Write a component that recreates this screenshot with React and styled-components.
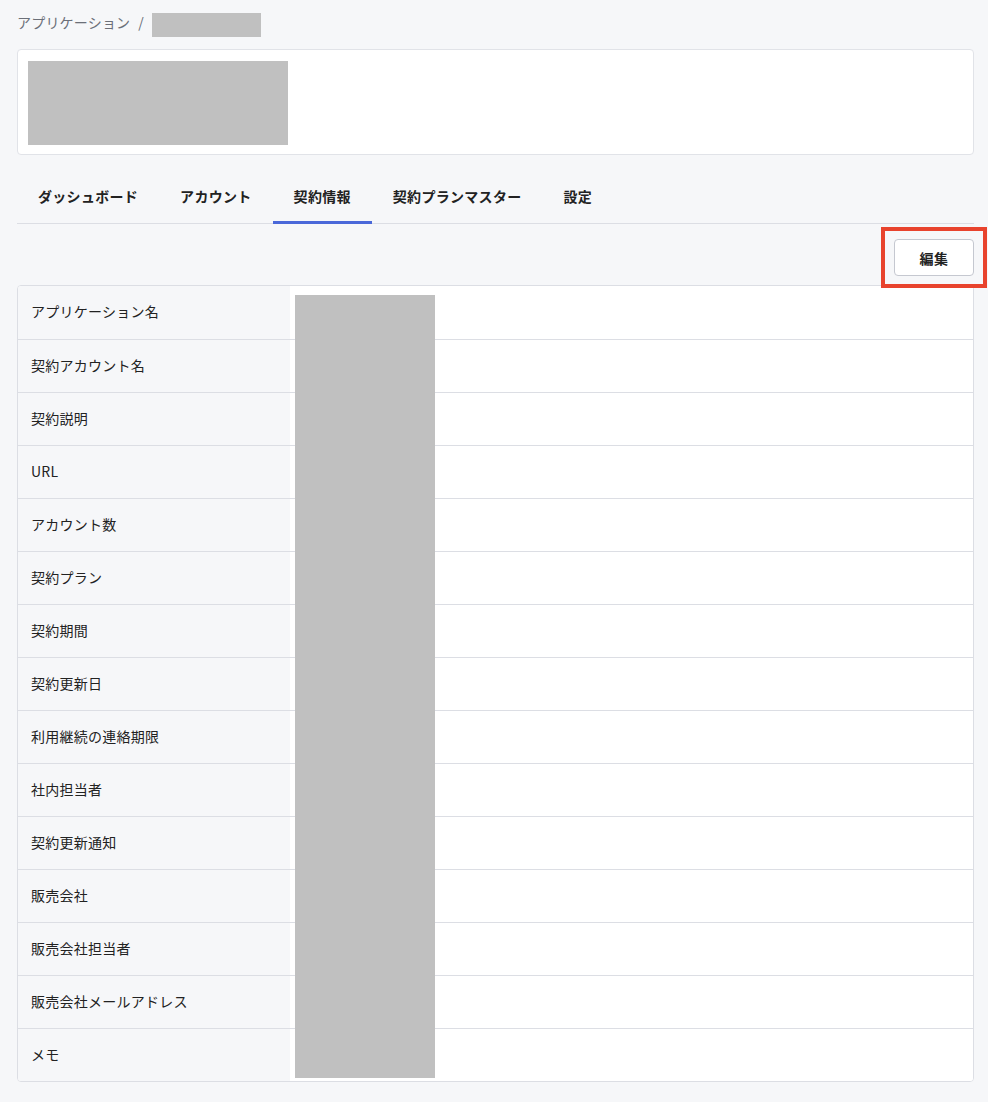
import React from "react";
import styled, { createGlobalStyle } from "styled-components";

const GlobalStyle = createGlobalStyle`
  html, body {
    margin: 0;
    padding: 0;
    background: #f6f7f9;
    font-family: "Noto Sans CJK JP", "Noto Sans", sans-serif;
    color: #222;
  }
`;

const Page = styled.div`
  padding: 10px 14px 20px 17px;
  display: flex;
  flex-direction: column;
`;

const Breadcrumb = styled.div`
  display: flex;
  align-items: center;
  gap: 8px;
  height: 30px;
  font-size: 14px;
  letter-spacing: 0.2px;
  color: #6b6f78;
`;

const Crumb = styled.span`
  padding-bottom: 6px;
`;

const Redacted = styled.div`
  background: #c0c0c0;
  width: ${(p) => p.w}px;
  height: ${(p) => p.h}px;
`;

const HeaderCard = styled.div`
  margin-top: 9px;
  height: 106px;
  box-sizing: border-box;
  background: #fff;
  border: 1px solid #e1e3e8;
  border-radius: 4px;
  padding: 11px 10px;
`;

const Tabs = styled.div`
  margin-top: 20px;
  display: flex;
  height: 48px;
  border-bottom: 1px solid #dcdee4;
`;

const Tab = styled.div`
  padding: 0 21px 5px;
  display: flex;
  align-items: center;
  font-size: 14px;
  font-weight: 700;
  letter-spacing: 0.3px;
  color: #222;
  border-bottom: 3px solid ${(p) => (p.active ? "#4a68d9" : "transparent")};
  margin-bottom: -1px;
`;

const Toolbar = styled.div`
  display: flex;
  justify-content: flex-end;
  padding: 15px 0 9px;
`;

const Highlight = styled.div`
  position: relative;
  z-index: 2;
`;

const Marker = styled.div`
  position: absolute;
  left: -13px;
  top: -12px;
  right: -13px;
  bottom: -12px;
  border: 4px solid #e8432d;
  pointer-events: none;
`;

const Button = styled.button`
  display: block;
  width: 80px;
  height: 37px;
  background: #fff;
  border: 1px solid #c5c8d0;
  border-radius: 4px;
  font-family: inherit;
  font-size: 14px;
  font-weight: 700;
  letter-spacing: 0.5px;
  color: #222;
`;

const Table = styled.div`
  position: relative;
  z-index: 1;
  background: #fff;
  border: 1px solid #dcdee4;
  border-radius: 4px;
  overflow: hidden;
`;

const Row = styled.div`
  display: grid;
  grid-template-columns: 272px 1fr;
  height: 53px;
  border-top: ${(p) => (p.first ? "none" : "1px solid #dcdee4")};
  box-sizing: border-box;
`;

const Label = styled.div`
  background: #f6f7f9;
  display: flex;
  align-items: center;
  padding: 0 0 3px 13px;
  font-size: 14px;
  letter-spacing: 0.25px;
  color: #222;
`;

const Value = styled.div`
  background: #fff;
`;

const Cover = styled.div`
  position: absolute;
  left: 277px;
  top: 9px;
  bottom: 3px;
  width: 140px;
  background: #c0c0c0;
`;

const labels = [
  "アプリケーション名",
  "契約アカウント名",
  "契約説明",
  "URL",
  "アカウント数",
  "契約プラン",
  "契約期間",
  "契約更新日",
  "利用継続の連絡期限",
  "社内担当者",
  "契約更新通知",
  "販売会社",
  "販売会社担当者",
  "販売会社メールアドレス",
  "メモ",
];

const tabs = ["ダッシュボード", "アカウント", "契約情報", "契約プランマスター", "設定"];

export default function App() {
  return (
    <>
      <GlobalStyle />
      <Page>
        <Breadcrumb>
          <Crumb>アプリケーション</Crumb>
          <Crumb>/</Crumb>
          <Redacted w={109} h={24} />
        </Breadcrumb>
        <HeaderCard>
          <Redacted w={260} h={84} />
        </HeaderCard>
        <Tabs>
          {tabs.map((t) => (
            <Tab key={t} active={t === "契約情報"}>
              {t}
            </Tab>
          ))}
        </Tabs>
        <Toolbar>
          <Highlight>
            <Button>編集</Button>
            <Marker />
          </Highlight>
        </Toolbar>
        <Table>
          {labels.map((l, i) => (
            <Row key={l} first={i === 0}>
              <Label>{l}</Label>
              <Value />
            </Row>
          ))}
          <Cover />
        </Table>
      </Page>
    </>
  );
}
